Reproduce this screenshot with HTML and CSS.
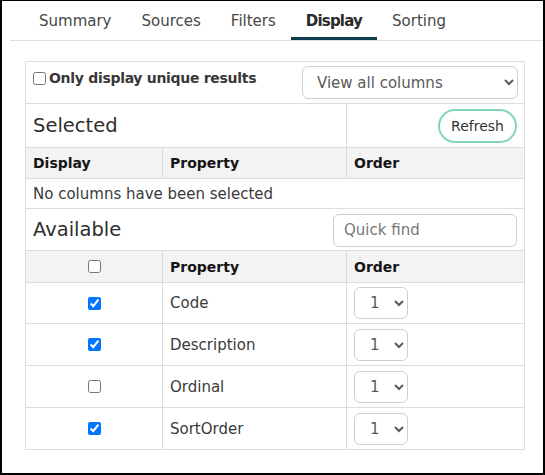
FILE: index.html
```html
<!DOCTYPE html>
<html lang="en">
<head>
<meta charset="utf-8">
<title>Display</title>
<link rel="stylesheet" href="styles.css">
</head>
<body>
  <nav class="tabs">
    <a class="tab">Summary</a>
    <a class="tab">Sources</a>
    <a class="tab">Filters</a>
    <a class="tab active">Display</a>
    <a class="tab">Sorting</a>
  </nav>

  <section class="panel">
    <div class="row r-options">
      <label class="unique"><input type="checkbox" class="cb">Only display unique results</label>
      <select class="sel sel-view"><option>View all columns</option></select>
    </div>

    <div class="row r-two r-section">
      <div class="cell"><span class="title">Selected</span></div>
      <div class="cell end"><button class="btn-refresh">Refresh</button></div>
    </div>

    <div class="row r-three r-head h31">
      <div class="cell">Display</div>
      <div class="cell">Property</div>
      <div class="cell">Order</div>
    </div>

    <div class="row r-one r-empty">
      <div class="cell">No columns have been selected</div>
    </div>

    <div class="row r-available">
      <span class="title">Available</span>
      <input class="quick" type="text" placeholder="Quick find">
    </div>

    <div class="row r-three r-head h32">
      <div class="cell center"><input type="checkbox" class="cb"></div>
      <div class="cell">Property</div>
      <div class="cell">Order</div>
    </div>

    <div class="row r-three r-item h41">
      <div class="cell center"><input type="checkbox" class="cb" checked></div>
      <div class="cell">Code</div>
      <div class="cell"><select class="sel sel-order"><option>1</option></select></div>
    </div>
    <div class="row r-three r-item">
      <div class="cell center"><input type="checkbox" class="cb" checked></div>
      <div class="cell">Description</div>
      <div class="cell"><select class="sel sel-order"><option>1</option></select></div>
    </div>
    <div class="row r-three r-item">
      <div class="cell center"><input type="checkbox" class="cb"></div>
      <div class="cell">Ordinal</div>
      <div class="cell"><select class="sel sel-order"><option>1</option></select></div>
    </div>
    <div class="row r-three r-item">
      <div class="cell center"><input type="checkbox" class="cb" checked></div>
      <div class="cell">SortOrder</div>
      <div class="cell"><select class="sel sel-order"><option>1</option></select></div>
    </div>
  </section>
</body>
</html>
```

FILE: styles.css
```css
* { box-sizing: border-box; }

html, body { margin: 0; padding: 0; }

body {
  width: 545px;
  height: 475px;
  border: 2px solid #000;
  border-top-width: 1px;
  background: #fff;
  font-family: "DejaVu Sans", sans-serif;
  font-size: 15px;
  color: #3a3a3a;
  overflow: hidden;
}

/* Tabs */
.tabs {
  display: flex;
  margin-left: 8px;
  padding-left: 14px;
  border-bottom: 1px solid #dedede;
  height: 40px;
}
.tab {
  display: block;
  height: 39px;
  padding: 5px 15px 0;
  line-height: 31px;
  font-size: 15px;
  color: #474747;
  border-bottom: 3px solid transparent;
}
.tab.active {
  font-weight: bold;
  color: #2a2a2a;
  letter-spacing: -0.8px;
  border-bottom-color: #0e3d4e;
}

/* Panel */
.panel {
  margin: 20px 0 0 23px;
  width: 500px;
  border: 1px solid #dcdcdc;
  border-bottom: 0;
}
.row {
  border-bottom: 1px solid #dcdcdc;
}
.r-options {
  height: 42px;
  display: flex;
  justify-content: space-between;
  align-items: flex-start;
  padding: 4px 6px 0 7px;
}
.unique {
  display: flex;
  align-items: center;
  margin-top: 2px;
  line-height: 20px;
  font-size: 14px;
  font-weight: bold;
  letter-spacing: -0.3px;
  color: #383838;
}
.cb {
  width: 13px;
  height: 13px;
  margin: 0;
}
.unique .cb { margin: 1px 3px 0 0; }

.sel {
  font-family: "DejaVu Sans", sans-serif;
  font-size: 15px;
  color: #5a5a5a;
  background: #fff;
  border: 1px solid #cfcfcf;
  border-radius: 6px;
}
.sel-view {
  width: 216px;
  height: 33px;
  padding-left: 10px;
}
.sel-order {
  width: 54px;
  height: 32px;
  padding-left: 11px;
}

.r-two {
  display: grid;
  grid-template-columns: 321px 1fr;
  height: 44px;
}
.r-three {
  display: grid;
  grid-template-columns: 137px 184px 1fr;
}
.r-one { display: grid; }

.cell {
  display: flex;
  align-items: center;
  padding: 0 7px;
  border-right: 1px solid #dcdcdc;
  font-size: 15px;
  color: #3a3a3a;
}
.cell:last-child { border-right: 0; }
.cell.end { justify-content: flex-end; }
.cell.center { justify-content: center; }

.title {
  font-size: 19.5px;
  color: #2e2e2e;
}

.btn-refresh {
  height: 34px;
  width: 79px;
  border: 2px solid #83d8b4;
  border-radius: 17px;
  background: #fff;
  font-family: "DejaVu Sans", sans-serif;
  font-size: 14px;
  color: #333;
  padding: 0;
}

.r-head {
  background: #f3f3f3;
}
.r-head .cell {
  font-size: 14px;
  font-weight: bold;
  color: #151515;
}
.h31 { height: 31px; }
.h32 { height: 32px; }

.r-empty { height: 30px; }

.r-available {
  height: 42px;
  display: flex;
  justify-content: space-between;
  align-items: center;
  padding: 0 7px;
}
.quick {
  width: 184px;
  height: 33px;
  border: 1px solid #cfcfcf;
  border-radius: 6px;
  padding: 0 10px;
  font-family: "DejaVu Sans", sans-serif;
  font-size: 15px;
  color: #333;
  margin-top: 1px;
}
.quick::placeholder { color: #777; }

.r-item { height: 42px; }
.r-item.h41 { height: 41px; }
```
